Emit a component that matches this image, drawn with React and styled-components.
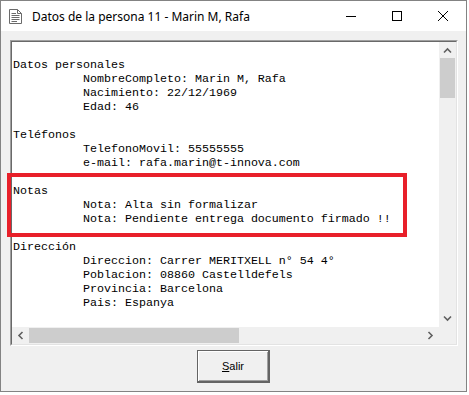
import React from "react"
import styled, { createGlobalStyle } from "styled-components"

const GlobalStyle = createGlobalStyle`
  html, body {
    margin: 0;
    padding: 0;
    background: #ffffff;
  }
`

const Window = styled.div`
  position: relative;
  box-sizing: border-box;
  width: 467px;
  height: 392px;
  border: 1px solid #838383;
  background: #f0f0f0;
  display: flex;
  flex-direction: column;
`

const TitleBar = styled.div`
  height: 30px;
  background: #ffffff;
  display: flex;
  align-items: center;
  padding-left: 7px;
  font-family: "Noto Sans", "Open Sans", sans-serif;
  font-size: 12px;
  color: #000;
`

const Title = styled.span`
  margin-left: 9px;
  flex: 1;
  white-space: nowrap;
`

const Controls = styled.div`
  display: flex;
  height: 100%;
`

const ControlButton = styled.div`
  width: 46px;
  display: flex;
  align-items: center;
  justify-content: center;
`

const Client = styled.div`
  flex: 1;
  display: flex;
  flex-direction: column;
  align-items: center;
  padding-top: 9px;
`

const Sunken = styled.div`
  box-sizing: border-box;
  width: 448px;
  height: 306px;
  margin-left: 1px;
  border: 1px solid;
  border-color: #a0a0a0 #ffffff #ffffff #a0a0a0;
`

const SunkenInner = styled.div`
  box-sizing: border-box;
  height: 100%;
  border: 1px solid;
  border-color: #696969 #e3e3e3 #e3e3e3 #696969;
  display: grid;
  grid-template-columns: 1fr 17px;
  grid-template-rows: 1fr 17px;
  background: #ffffff;
`

const Content = styled.div`
  overflow: hidden;
  padding: 2px 0 0 1px;
  font-family: "Liberation Mono", "Courier New", monospace;
  font-size: 11.67px;
  line-height: 14px;
  color: #000;
  white-space: pre;
`

const Line = styled.div`
  height: 14px;
  padding-left: ${p => (p.$indent ? "70px" : "0")};
`

const VScroll = styled.div`
  background: #f0f0f0;
  display: flex;
  flex-direction: column;
  align-items: center;
`

const HScroll = styled.div`
  background: #f0f0f0;
  display: flex;
  align-items: center;
`

const Corner = styled.div`
  background: #f0f0f0;
`

const Arrow = styled.div`
  width: 17px;
  height: 17px;
  flex: none;
  display: flex;
  align-items: center;
  justify-content: center;
`

const VThumb = styled.div`
  width: 15px;
  height: 40px;
  background: #cdcdcd;
  margin-top: -1px;
`

const HThumb = styled.div`
  width: 210px;
  height: 15px;
  background: #cdcdcd;
`

const Spacer = styled.div`
  flex: 1;
`

const ButtonRow = styled.div`
  padding-top: 4px;
  display: flex;
  justify-content: center;
  width: 100%;
`

const Button = styled.div`
  box-sizing: border-box;
  width: 73px;
  height: 33px;
  border: 1px solid #646464;
  border-right-width: 2px;
  border-bottom-width: 2px;
  box-shadow: inset 1px 1px #ffffff, inset -1px -1px #a0a0a0;
  background: #f0f0f0;
  display: flex;
  align-items: center;
  justify-content: center;
  font-family: "Liberation Sans", Arial, sans-serif;
  font-size: 11px;
  color: #000;
`

const Underline = styled.span`
  text-decoration: underline;
`

const Highlight = styled.div`
  position: absolute;
  left: 6px;
  top: 172px;
  width: 400px;
  height: 64px;
  box-sizing: border-box;
  border: 4px solid #e8202a;
  pointer-events: none;
`

const ArrowIcon = ({ dir }) => {
  const rot = { up: 0, right: 90, down: 180, left: 270 }[dir]
  return (
    <svg width="9" height="9" viewBox="0 0 9 9" style={{ transform: `rotate(${rot}deg)` }}>
      <path d="M1 6.5 L4.5 3 L8 6.5" fill="none" stroke="#606060" strokeWidth="1.6" />
    </svg>
  )
}

const DocIcon = () => (
  <svg width="15" height="17" viewBox="0 0 15 17">
    <path d="M1.5 1.5 H9.5 L13.5 5.5 V15.5 H1.5 Z" fill="#fff" stroke="#6a6a6a" />
    <path d="M9.5 1.5 V5.5 H13.5" fill="none" stroke="#6a6a6a" />
    <path d="M3.5 5.5 H8 M3.5 7.5 H11.5 M3.5 9.5 H11.5 M3.5 11.5 H11.5 M3.5 13.5 H9" stroke="#6a6a6a" />
  </svg>
)

const lines = [
  ["", false],
  ["Datos personales", false],
  ["NombreCompleto: Marin M, Rafa", true],
  ["Nacimiento: 22/12/1969", true],
  ["Edad: 46", true],
  ["", false],
  ["Teléfonos", false],
  ["TelefonoMovil: 55555555", true],
  ["e-mail: rafa.marin@t-innova.com", true],
  ["", false],
  ["Notas", false],
  ["Nota: Alta sin formalizar", true],
  ["Nota: Pendiente entrega documento firmado !!", true],
  ["", false],
  ["Dirección", false],
  ["Direccion: Carrer MERITXELL n° 54 4°", true],
  ["Poblacion: 08860 Castelldefels", true],
  ["Provincia: Barcelona", true],
  ["Pais: Espanya", true],
]

const App = () => (
  <>
    <GlobalStyle />
    <Window>
      <TitleBar>
        <DocIcon />
        <Title>Datos de la persona 11 - Marin M, Rafa</Title>
        <Controls>
          <ControlButton>
            <svg width="10" height="10" viewBox="0 0 10 10">
              <path d="M0 5.5 H10" stroke="#000" />
            </svg>
          </ControlButton>
          <ControlButton>
            <svg width="10" height="10" viewBox="0 0 10 10">
              <rect x="0.5" y="0.5" width="9" height="9" fill="none" stroke="#000" />
            </svg>
          </ControlButton>
          <ControlButton>
            <svg width="10" height="10" viewBox="0 0 10 10">
              <path d="M0 0 L10 10 M10 0 L0 10" stroke="#000" strokeWidth="1" />
            </svg>
          </ControlButton>
        </Controls>
      </TitleBar>
      <Client>
        <Sunken>
          <SunkenInner>
            <Content>
              {lines.map(([text, indent], i) => (
                <Line key={i} $indent={indent}>
                  {text}
                </Line>
              ))}
            </Content>
            <VScroll>
              <Arrow>
                <ArrowIcon dir="up" />
              </Arrow>
              <VThumb />
              <Spacer />
              <Arrow>
                <ArrowIcon dir="down" />
              </Arrow>
            </VScroll>
            <HScroll>
              <Arrow>
                <ArrowIcon dir="left" />
              </Arrow>
              <HThumb />
              <Spacer />
              <Arrow>
                <ArrowIcon dir="right" />
              </Arrow>
            </HScroll>
            <Corner />
          </SunkenInner>
        </Sunken>
        <ButtonRow>
          <Button>
            <span>
              <Underline>S</Underline>alir
            </span>
          </Button>
        </ButtonRow>
      </Client>
      <Highlight />
    </Window>
  </>
)

export default App
